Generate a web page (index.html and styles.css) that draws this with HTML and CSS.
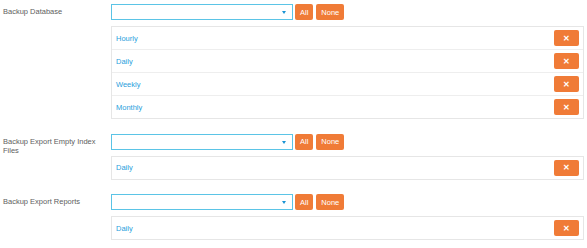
FILE: index.html
```html
<!DOCTYPE html>
<html lang="en">
  <head>
    <meta charset="UTF-8" />
    <title>Backup Settings</title>
    <link rel="stylesheet" href="styles.css">
  </head>
  <body>
    <div class="field">
      <div class="field-label">Backup Database</div>
      <div class="field-body">
        <div class="picker">
          <div class="select"><span class="select-arrow"></span></div>
          <button class="btn">All</button>
          <button class="btn">None</button>
        </div>
        <div class="items">
          <div class="item"><a href="#">Hourly</a><button class="btn remove">✕</button></div>
          <div class="item"><a href="#">Daily</a><button class="btn remove">✕</button></div>
          <div class="item"><a href="#">Weekly</a><button class="btn remove">✕</button></div>
          <div class="item"><a href="#">Monthly</a><button class="btn remove">✕</button></div>
        </div>
      </div>
    </div>

    <div class="field">
      <div class="field-label">Backup Export Empty Index Files</div>
      <div class="field-body">
        <div class="picker">
          <div class="select"><span class="select-arrow"></span></div>
          <button class="btn">All</button>
          <button class="btn">None</button>
        </div>
        <div class="items">
          <div class="item"><a href="#">Daily</a><button class="btn remove">✕</button></div>
        </div>
      </div>
    </div>

    <div class="field">
      <div class="field-label">Backup Export Reports</div>
      <div class="field-body">
        <div class="picker">
          <div class="select"><span class="select-arrow"></span></div>
          <button class="btn">All</button>
          <button class="btn">None</button>
        </div>
        <div class="items">
          <div class="item"><a href="#">Daily</a><button class="btn remove">✕</button></div>
        </div>
      </div>
    </div>
  </body>
</html>
```

FILE: styles.css
```css
body {
  font-family: "Liberation Sans", Arial, sans-serif;
  font-size: 7.5px;
  margin: 0;
  background: #fff;
  color: #555;
}

.field {
  display: flex;
  padding: 4px 0 10px;
}

.field + .field {
  padding-top: 4.5px;
}

.field-label {
  width: 100px;
  flex: none;
  padding: 3px 8px 0 3px;
  line-height: 9px;
  color: #606060;
}

.field-body {
  width: 473px;
  display: flex;
  flex-direction: column;
  gap: 6px;
}

.picker {
  display: flex;
  align-items: center;
  gap: 3px;
}

.select {
  position: relative;
  width: 182px;
  height: 16px;
  box-sizing: border-box;
  border: 1px solid #5bc4e6;
  background: #fff;
  margin-right: -1px;
}

.select-arrow {
  position: absolute;
  right: 6px;
  top: 6px;
  border-left: 2.5px solid transparent;
  border-right: 2.5px solid transparent;
  border-top: 3px solid #1a94d4;
}

.btn {
  font-family: inherit;
  font-size: 7.5px;
  height: 16px;
  padding: 0 5px;
  border: none;
  border-radius: 2px;
  background: #f07b37;
  color: #fff;
  cursor: pointer;
}

.items {
  border: 1px solid #e6e6e6;
}

.item {
  display: flex;
  align-items: center;
  justify-content: space-between;
  height: 22px;
  padding: 0 4px 0 4px;
  border-bottom: 1px solid #eeeeee;
}

.item:last-child {
  border-bottom: none;
}

.item a {
  color: #2aa0dc;
  text-decoration: none;
}

.btn.remove {
  width: 25px;
  padding: 0;
  font-size: 8px;
  font-weight: bold;
}
```
